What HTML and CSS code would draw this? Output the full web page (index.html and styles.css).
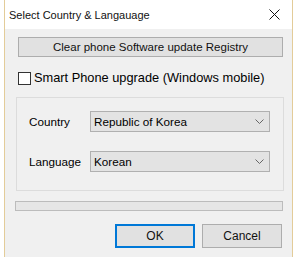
FILE: index.html
```html
<!DOCTYPE html>
<html>
<head>
  <title>Select Country &amp; Langauage</title>
  <link rel="stylesheet" href="styles.css">
</head>
<body>
  <div class="dialog">
    <div class="titlebar">
      <span class="title">Select Country &amp; Langauage</span>
      <svg class="close" width="11" height="11" viewBox="0 0 11 11">
        <path d="M0.5 0.5 L10.5 10.5 M10.5 0.5 L0.5 10.5" stroke="#111" stroke-width="1" fill="none"/>
      </svg>
    </div>
    <div class="content">
      <button class="btn wide">Clear phone Software update Registry</button>
      <label class="check">
        <span class="box"></span>
        Smart Phone upgrade (Windows mobile)
      </label>
      <div class="group">
        <div class="field">
          <span class="label">Country</span>
          <div class="combo">
            <span>Republic of Korea</span>
            <svg width="9" height="5" viewBox="0 0 9 5"><path d="M0.5 0.5 L4.5 4.5 L8.5 0.5" stroke="#666" fill="none"/></svg>
          </div>
        </div>
        <div class="field">
          <span class="label">Language</span>
          <div class="combo">
            <span>Korean</span>
            <svg width="9" height="5" viewBox="0 0 9 5"><path d="M0.5 0.5 L4.5 4.5 L8.5 0.5" stroke="#666" fill="none"/></svg>
          </div>
        </div>
      </div>
      <div class="progress"></div>
      <div class="actions">
        <button class="btn default">OK</button>
        <button class="btn">Cancel</button>
      </div>
    </div>
  </div>
</body>
</html>
```

FILE: styles.css
```css
body {
  margin: 0;
  background-color: #fff;
  font-family: "Liberation Sans", Arial, sans-serif;
  font-size: 12px;
  color: #000;
}
.dialog {
  width: 289px;
  height: 257px;
  margin-left: 4px;
  border-left: 1px solid #e3cc99;
  border-right: 1px solid #e3cc99;
  display: flex;
  flex-direction: column;
  box-sizing: border-box;
}
.titlebar {
  height: 29px;
  background-color: #fff;
  display: flex;
  align-items: center;
  justify-content: space-between;
  padding: 0 8px 0 4px;
  flex-shrink: 0;
}
.title {
  font-family: "Liberation Sans", Arial, sans-serif;
  font-size: 11px;
  color: #111;
}
.close {
  margin-right: 4px;
}
.content {
  flex: 1;
  background-color: #f0f0f0;
  padding: 8px 9px 0 10px;
}
.btn {
  font-family: "Liberation Sans", Arial, sans-serif;
  font-size: 11.5px;
  background-color: #e1e1e1;
  border: 1px solid #adadad;
  color: #111;
  padding: 0;
  height: 20px;
}
.btn.wide {
  width: 265px;
  display: block;
  margin-left: 3px;
}
.check {
  display: flex;
  align-items: center;
  gap: 3px;
  height: 14px;
  line-height: 14px;
  margin: 14px 0 0 3px;
  font-size: 12.8px;
}
.box {
  width: 11px;
  height: 11px;
  border: 1px solid #333;
  background-color: #fff;
}
.group {
  margin: 12px 0 0 1px;
  width: 268px;
  height: 94px;
  border: 1px solid #dcdcdc;
  box-sizing: border-box;
  padding: 13px 13px 0 12px;
  display: flex;
  flex-direction: column;
  gap: 19px;
}
.field {
  display: flex;
  align-items: center;
}
.label {
  width: 61px;
  font-size: 11.7px;
}
.combo {
  flex: 1;
  height: 21px;
  box-sizing: border-box;
  border: 1px solid #b0b0b0;
  background-color: #e3e3e3;
  display: flex;
  align-items: center;
  justify-content: space-between;
  padding: 0 5px 0 3px;
  font-size: 11.7px;
}
.progress {
  margin: 10px 0 0 0;
  width: 268px;
  height: 10px;
  box-sizing: border-box;
  border: 1px solid #bcbcbc;
  background-color: #e6e6e6;
}
.actions {
  display: flex;
  justify-content: flex-end;
  gap: 7px;
  margin: 13px 1px 0 0;
}
.actions .btn {
  width: 80px;
  height: 24px;
  font-size: 12px;
}
.btn.default {
  border: 2px solid #0078d7;
}
```
